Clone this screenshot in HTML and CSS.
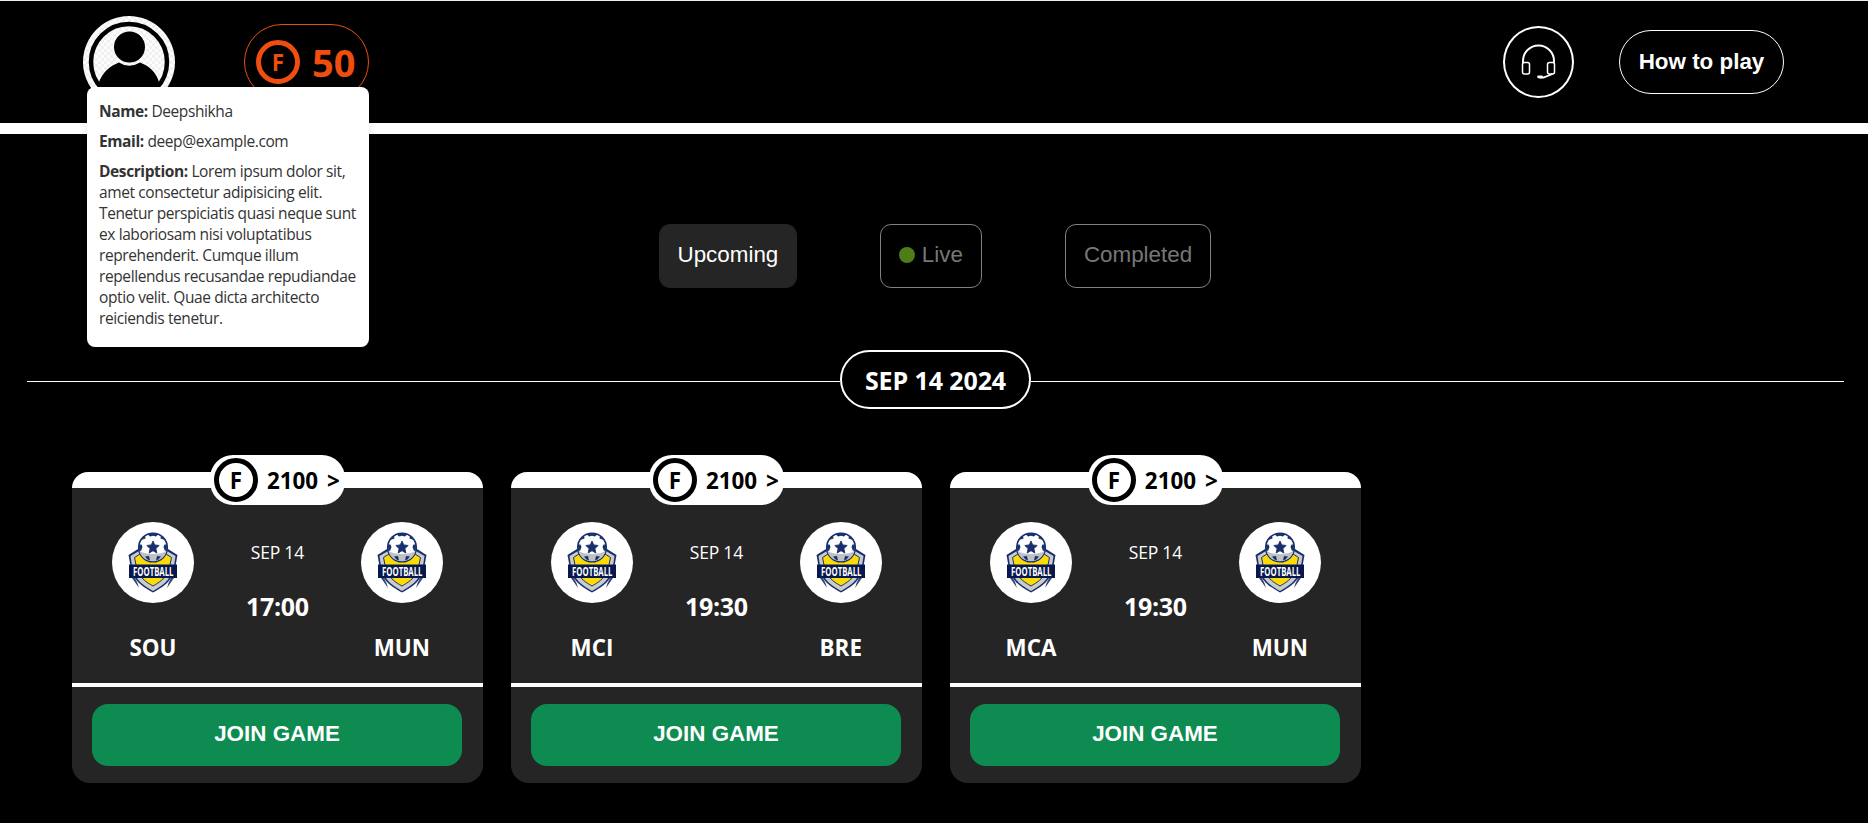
FILE: index.html
```html
<!DOCTYPE html>
<html lang="en">
<head>
<meta charset="utf-8">
<title>Fantasy Football</title>
<link rel="stylesheet" href="styles.css">
</head>
<body>
<svg class="defs" aria-hidden="true">
  <symbol id="crest" viewBox="0 0 82 82">
    <path d="M20 56L27 66L25.500 61L23 56ZM62 56L55 66L56.500 61L59 56Z" fill="#3a4a78"/>
    <path d="M41 70.500C32 65.500 25 61 22 54L18.500 44L16.500 33L26 27H56L65.500 33L63.500 44L60 54C57 61 50 65.500 41 70.500Z" fill="#1b2f66"/>
    <path d="M41 69C33 64.500 26.500 60 24 54L20 44L18.500 34L27 29H55L63.500 34L62 44L58 54C55.500 60 49 64.500 41 69Z" fill="#c9cbd2"/>
    <path d="M41 64C34 60 30 57 27.500 52L24 43L22.500 35.500L28 32H54L59.500 35.500L58 43L54.500 52C52 57 48 60 41 64Z" fill="#fddc05" stroke="#1b2f66" stroke-width="1"/>
    <circle cx="41" cy="25.500" r="14.300" fill="#fff" stroke="#18306d" stroke-width="1.600"/>
    <path d="M27.500 29C33 33 49 33 54.500 29C53 36 47 39.200 41 39.200C35 39.200 29 36 27.500 29Z" fill="#bfc1c7"/>
    <path d="M41 19L42.700 22.900L47.200 23.500L43.900 26.500L44.800 31L41 28.700L37.200 31L38.100 26.500L34.800 23.500L39.300 22.900Z" fill="#18306d" stroke="#18306d" stroke-width=".9"/>
    <path d="M35.500 12.300Q41 10.500 46.500 12.300L44 14.500L41 13.800L38 14.500ZM27 22.500L29.500 22.500L30.500 25L29 29L27.200 28ZM55 22.500L52.500 22.500L51.500 25L53 29L54.800 28ZM33 34.500L37 34L38 38.500L35.500 37.500ZM49 34.500L45 34L44 38.500L46.500 37.500ZM29 18L33 13.500L33.500 16.500ZM53 18L49 13.500L48.500 16.500Z" fill="#18306d"/>
    <path d="M17 42.500H65V56H17Z" fill="#06184c"/>
    <text x="21" y="53.700" class="crest-text" textLength="40.500" lengthAdjust="spacingAndGlyphs">FOOTBALL</text>
  </symbol>
</svg>

<header class="topbar">
  <div class="account">
    <svg class="avatar" viewBox="0 0 92 92">
      <defs>
        <pattern id="checks" width="6" height="6" patternUnits="userSpaceOnUse">
          <path d="M0 0H6V6H0Z" fill="#fdfdfd"/><path d="M0 0H3V3H0ZM3 3H6V6H3Z" fill="#f0f0f0"/>
        </pattern>
        <clipPath id="portrait"><circle cx="46" cy="46" r="37"/></clipPath>
      </defs>
      <circle cx="46" cy="46" r="46" fill="url(#checks)"/>
      <circle cx="46" cy="46" r="38" fill="none" stroke="#000" stroke-width="4.500"/>
      <g clip-path="url(#portrait)">
        <path d="M16 66C20 56 27 50 36 46.500Q46 53 57 46.500C66 50 73 56 76 66L70 84H22Z" fill="#000"/>
      </g>
      <circle cx="46.500" cy="31" r="15.500" fill="#000"/>
    </svg>
    <div class="balance"><span class="coin">F</span><span class="balance-value">50</span></div>
    <div class="profile-card">
      <p><b>Name:</b> Deepshikha</p>
      <p><b>Email:</b> deep@example.com</p>
      <p><b>Description:</b> Lorem ipsum dolor sit,<br>amet consectetur adipisicing elit.<br>Tenetur perspiciatis quasi neque sunt<br>ex laboriosam nisi voluptatibus<br>reprehenderit. Cumque illum<br>repellendus recusandae repudiandae<br>optio velit. Quae dicta architecto<br>reiciendis tenetur.</p>
    </div>
  </div>
  <div class="actions">
    <button class="support" aria-label="Support">
      <svg viewBox="0 0 36 36" width="36" height="36" fill="none" stroke="#fff" stroke-width="1.500">
        <path d="M2 19V17A15.500 15.500 0 0 1 33 17V19" stroke-width="1.900"/>
        <rect x="1.500" y="18.500" width="7" height="11.500" rx="2"/>
        <rect x="26.500" y="18.500" width="7" height="11.500" rx="2"/>
        <path d="M31.500 30L22.500 33.500H18.500" stroke-width="1.800"/>
        <path d="M17.500 32.800H20.500" stroke-width="2.800" stroke-linecap="round"/>
      </svg>
    </button>
    <button class="how">How to play</button>
  </div>
</header>

<main>
  <nav class="tabs">
    <button class="tab tab-active">Upcoming</button>
    <button class="tab"><span class="live-dot"></span>Live</button>
    <button class="tab">Completed</button>
  </nav>

  <div class="date-row"><span class="date">SEP 14 2024</span></div>

  <section class="games">
    <article class="game">
      <div class="game-top"><div class="prize"><span class="coin coin-dark">F</span><span class="prize-value">2100</span><span class="arrow">&gt;</span></div></div>
      <div class="match">
        <div class="team"><div class="crest"><svg><use href="#crest"/></svg></div><span class="team-name">SOU</span></div>
        <div class="when"><span class="day">SEP 14</span><span class="time">17:00</span></div>
        <div class="team"><div class="crest"><svg><use href="#crest"/></svg></div><span class="team-name">MUN</span></div>
      </div>
      <div class="join-row"><button class="join">JOIN GAME</button></div>
    </article>
    <article class="game">
      <div class="game-top"><div class="prize"><span class="coin coin-dark">F</span><span class="prize-value">2100</span><span class="arrow">&gt;</span></div></div>
      <div class="match">
        <div class="team"><div class="crest"><svg><use href="#crest"/></svg></div><span class="team-name">MCI</span></div>
        <div class="when"><span class="day">SEP 14</span><span class="time">19:30</span></div>
        <div class="team"><div class="crest"><svg><use href="#crest"/></svg></div><span class="team-name">BRE</span></div>
      </div>
      <div class="join-row"><button class="join">JOIN GAME</button></div>
    </article>
    <article class="game">
      <div class="game-top"><div class="prize"><span class="coin coin-dark">F</span><span class="prize-value">2100</span><span class="arrow">&gt;</span></div></div>
      <div class="match">
        <div class="team"><div class="crest"><svg><use href="#crest"/></svg></div><span class="team-name">MCA</span></div>
        <div class="when"><span class="day">SEP 14</span><span class="time">19:30</span></div>
        <div class="team"><div class="crest"><svg><use href="#crest"/></svg></div><span class="team-name">MUN</span></div>
      </div>
      <div class="join-row"><button class="join">JOIN GAME</button></div>
    </article>
  </section>
</main>
</body>
</html>
```

FILE: styles.css
```css
* { box-sizing: border-box; }
body {
  margin: 0;
  height: 823px;
  overflow: hidden;
  background: #000;
  color: #fff;
  font-family: "Open Sans", "Noto Sans", sans-serif;
  border-top: 1px solid #e9eeec;
}
.defs { display: none; }
button {
  font: 22.4px "Liberation Sans", Arial, sans-serif;
  color: #fff;
  background: transparent;
  border: 0;
  padding: 0;
}
.topbar {
  height: 133px;
  border-bottom: 11px solid #fff;
  display: flex;
  justify-content: space-between;
  align-items: center;
  padding: 0 84px 0 83px;
}
.account { position: relative; display: flex; align-items: center; gap: 69px; }
.avatar { width: 92px; height: 92px; display: block; }
.balance {
  width: 125px;
  height: 76px;
  border: 1px solid #f04e0f;
  border-radius: 38px;
  color: #f04e0f;
  display: flex;
  align-items: center;
  padding-left: 11px;
  gap: 12px;
}
.coin {
  width: 44px;
  height: 44px;
  flex: none;
  border: 5px solid currentColor;
  border-radius: 50%;
  display: flex;
  align-items: center;
  justify-content: center;
  font-size: 22.4px;
  line-height: 30px;
  font-weight: 700;
}
.balance .coin { padding-top: 2px; }
.balance-value { font-size: 38px; font-weight: 700; line-height: 44px; }
.profile-card {
  position: absolute;
  left: 4px;
  top: 71px;
  z-index: 2;
  width: 282px;
  height: 260px;
  padding: 13.5px 12px;
  border-radius: 8px;
  background: #fff;
  color: #333;
  box-shadow: 0 4px 8px rgba(0, 0, 0, 0.1);
  font-size: 15.5px;
  line-height: 21px;
  letter-spacing: -0.4px;
  white-space: nowrap;
}
.profile-card b { letter-spacing: -0.4px; }
.profile-card p { margin: 0 0 9px; }
.actions { display: flex; align-items: center; gap: 45px; }
.support {
  width: 71px;
  height: 72px;
  border: 2px solid #fff;
  border-radius: 50%;
  display: flex;
  align-items: center;
  justify-content: center;
}
.how { width: 165px; height: 64px; border: 1px solid #fff; border-radius: 32px; font-weight: 700; padding-bottom: 1px; }
.tabs { display: flex; gap: 83px; padding: 90px 0 0 659px; }
.tab {
  height: 64px;
  padding: 0 18px 2px;
  border: 1px solid #808080;
  border-radius: 11px;
  color: #777;
  display: flex;
  align-items: center;
}
.tab-active { background: #252525; border-color: #252525; color: #fff; padding: 0 17.5px 2px; }
.live-dot { width: 16px; height: 16px; border-radius: 50%; background: #4d7c18; margin-right: 7px; }
.date-row {
  margin: 62px 24px 0 27px;
  height: 59px;
  display: flex;
  align-items: center;
}
.date-row::before, .date-row::after { content: ""; flex: 1; height: 1px; background: #fff; margin-top: 4px; }
.date {
  width: 191px;
  height: 59px;
  border: 2px solid #fff;
  border-radius: 30px;
  text-align: center;
  font-size: 25px;
  font-weight: 700;
  line-height: 56px;
  letter-spacing: -0.1px;
}
.games { display: flex; gap: 28.2px; padding: 63px 0 0 72px; }
.game { width: 410.8px; height: 311px; border-radius: 18px; background: #252525; }
.game-top {
  height: 16px;
  background: #fff;
  border-radius: 16px 16px 0 0;
  display: flex;
  align-items: center;
  justify-content: center;
}
.prize {
  width: 135px;
  height: 50px;
  flex: none;
  background: #fff;
  color: #000;
  border-radius: 23px;
  display: flex;
  align-items: center;
  padding-left: 4px;
  font-size: 22.4px;
  line-height: 30px;
  font-weight: 700;
  white-space: nowrap;
}
.coin-dark { padding-top: 1px; }
.prize-value { margin-left: 9px; padding-top: 2px; }
.arrow { margin-left: 9px; padding-top: 2px; }
.match {
  height: 199px;
  border-bottom: 4px solid #fff;
  display: flex;
  justify-content: space-between;
  padding: 34px 40px 0;
}
.team { width: 82px; display: flex; flex-direction: column; align-items: center; }
.crest { width: 82px; height: 81px; border-radius: 50%; background: #fff; overflow: hidden; }
.crest svg { width: 82px; height: 82px; display: block; }
.crest-text { font: 700 11.8px "Open Sans", sans-serif; fill: #fff; }
.team-name { font-size: 22.4px; font-weight: 700; line-height: 30px; margin-top: 30px; }
.when { display: flex; flex-direction: column; align-items: center; }
.day { font-size: 17.5px; line-height: 24px; margin-top: 18px; letter-spacing: -0.2px; }
.time { font-size: 25px; font-weight: 700; line-height: 34px; margin-top: 25px; letter-spacing: -0.3px; }
.join-row { padding: 17px 20px 0; }
.join { width: 370px; height: 62px; border-radius: 16px; background: #0d8b50; font-weight: 700; display: block; padding-bottom: 2px; }
```
